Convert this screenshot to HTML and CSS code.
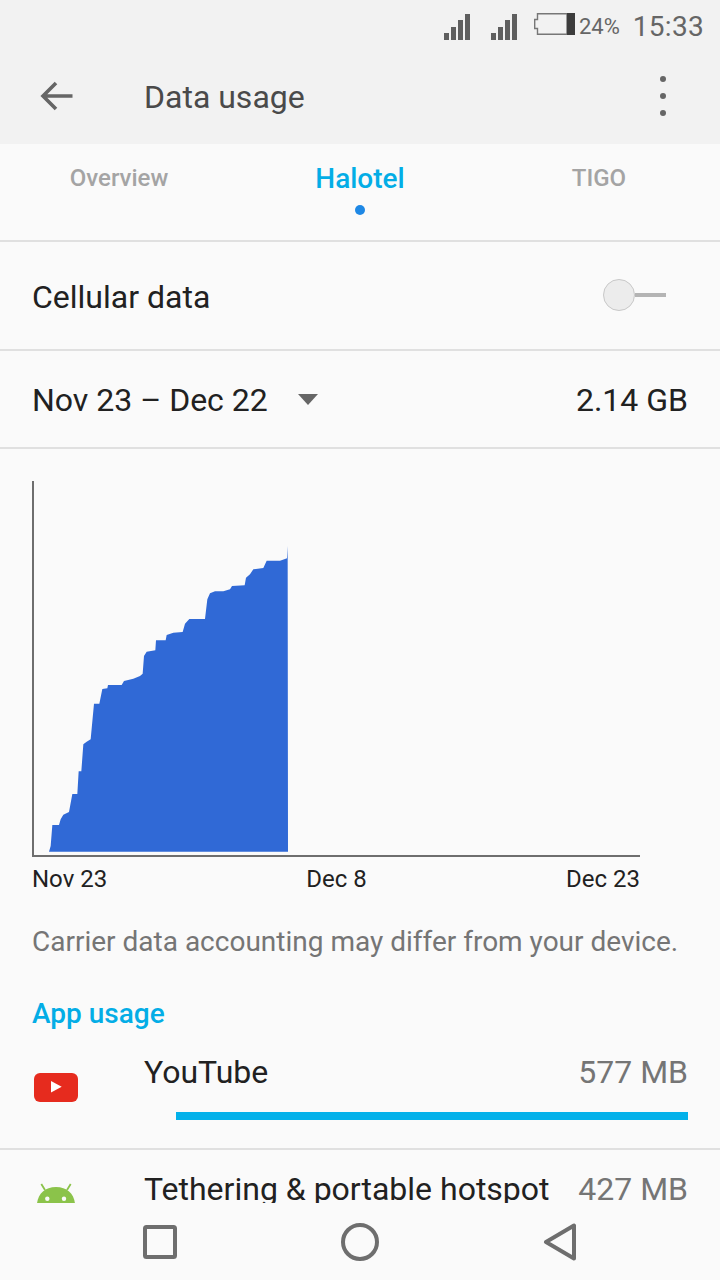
FILE: index.html
```html
<!DOCTYPE html>
<html lang="en">
<head>
<meta charset="utf-8">
<title>Data usage</title>
<link rel="stylesheet" href="styles.css">
</head>
<body>
<div class="screen">
  <header class="appbar">
    <div class="status">
      <svg class="sig" width="26" height="26" viewBox="0 0 26 26"><path d="M0 19h5v7H0zM7 13h5v13H7zM14 6h5v20h-5zM21 0h5v26h-5z"/></svg>
      <svg class="sig sig2" width="26" height="26" viewBox="0 0 26 26"><path d="M0 19h5v7H0zM7 13h5v13H7zM14 6h5v20h-5zM21 0h5v26h-5z"/></svg>
      <svg class="batt" width="41" height="22" viewBox="0 0 41 22"><path class="batt-o" d="M3.500 .7H33v20.600H3.500V15.500H.7V6.500H3.500z"/><rect class="batt-f" x="33" y="0" width="8" height="22"/></svg>
      <span class="pct">24%</span>
      <span class="time">15:33</span>
    </div>
    <div class="toolbar">
      <svg class="back" width="34" height="30" viewBox="0 0 34 30"><path d="M32.500 15H3M16 2 3 15l13 13"/></svg>
      <span class="title">Data usage</span>
      <svg class="more" width="6" height="40" viewBox="0 0 6 40"><circle cx="3" cy="3" r="3"/><circle cx="3" cy="20" r="3"/><circle cx="3" cy="37" r="3"/></svg>
    </div>
  </header>
  <main class="content">
    <nav class="tabs">
      <div class="tab">Overview</div>
      <div class="tab tab-on">Halotel<i class="dot"></i></div>
      <div class="tab">TIGO</div>
    </nav>
    <section class="row row-cell">
      <span class="label">Cellular data</span>
      <div class="switch"><i class="knob"></i><i class="track"></i></div>
    </section>
    <section class="row row-date">
      <span class="label date">Nov 23 – Dec 22</span><i class="caret"></i>
      <span class="total">2.14 GB</span>
    </section>
    <section class="chart">
      <svg class="graph" width="608" height="377" viewBox="0 0 608 377">
        <g transform="translate(-12 50) scale(.33333)">
          <polygon class="area" points="87,962 92,945 97,882 117,882 122,865 130,851 147,843 157,789 172,789 176,721 184,721 190,640 200,632 212,625 222,518 238,518 247,474 262,472 264,462 305,462 312,450 340,443 360,435 368,428 372,375 380,362 406,358 408,328 437,328 440,312 460,305 488,303 495,278 508,264 555,264 562,205 570,187 585,181 610,181 630,175 636,165 674,163 678,140 690,130 700,115 730,111 740,89 780,89 795,84 801,82 803,45 804,962"/>
        </g>
        <path class="axis" d="M1 0V375H608"/>
      </svg>
      <div class="ticks"><span>Nov 23</span><span>Dec 8</span><span>Dec 23</span></div>
    </section>
    <p class="note">Carrier data accounting may differ from your device.</p>
    <h2 class="subhead">App usage</h2>
    <div class="app app-first">
      <svg class="ico-yt" width="46" height="30" viewBox="0 0 46 30"><rect x="1" y="0" width="44" height="29" rx="6" fill="#e62b1e"/><path d="M18 8l10.700 5.800L18 19.600z" fill="#fff"/></svg>
      <div class="app-body">
        <div class="app-line"><span class="app-name">YouTube</span><span class="app-size">577 MB</span></div>
        <div class="bar"></div>
      </div>
    </div>
    <div class="app app-second">
      <svg class="ico-and" width="40" height="30" viewBox="0 0 40 30"><path d="M1 20.500C2 11 9 4 20 4s18 7 19 16.500V30H1z" fill="#8bc34a"/><path d="M5.300 1 9 7M34.700 1 31 7" stroke="#8bc34a" stroke-width="1.800" fill="none"/><circle cx="11.300" cy="15.700" r="2.200" fill="#fafafa"/><circle cx="28" cy="15.700" r="2.200" fill="#fafafa"/></svg>
      <div class="app-body">
        <div class="app-line"><span class="app-name">Tethering &amp; portable hotspot</span><span class="app-size">427 MB</span></div>
      </div>
    </div>
  </main>
  <footer class="navbar">
    <svg width="34" height="34" viewBox="0 0 34 34"><rect x="2" y="2" width="30" height="30" rx="1.500"/></svg>
    <svg width="38" height="38" viewBox="0 0 38 38"><circle cx="19" cy="19" r="17"/></svg>
    <svg width="34" height="38" viewBox="0 0 34 38"><path d="M3 19 31 2.500v33z"/></svg>
  </footer>
</div>
</body>
</html>
```
FILE: styles.css
```css
* { box-sizing: border-box; }
html, body { margin: 0; padding: 0; }
body { font-family: Roboto, "Noto Sans", sans-serif; background: #fafafa; color: #212121; }
.screen { width: 720px; height: 1280px; display: flex; flex-direction: column; overflow: hidden; }

.appbar { height: 144px; background: #f2f2f2; flex: none; }
.status { height: 48px; display: flex; align-items: flex-start; padding: 14px 16px 0 444px; color: #666; }
.sig { fill: #5f5f5f; }
.sig2 { margin-left: 21px; }
.batt { margin-left: 17px; margin-top: -1px; }
.batt-o { fill: none; stroke: #777; stroke-width: 1.400; }
.batt-f { fill: #3c3c3c; }
.pct { font-size: 22px; line-height: 26px; margin-left: 4px; }
.time { font-size: 28px; line-height: 26px; margin-left: auto; letter-spacing: .3px; }
.toolbar { height: 96px; display: flex; align-items: center; padding: 0 54px 0 40px; }
.back { fill: none; stroke: #666; stroke-width: 3.600; }
.title { font-size: 32px; color: #4a4a4a; margin: 2px 0 0 70px; flex: 1; }
.more { fill: #666; }

.content { flex: 1; min-height: 0; overflow: hidden; }
.tabs { height: 98px; display: grid; grid-template-columns: 240px 240px 240px; border-bottom: 2px solid #e0e0e0; }
.tab { position: relative; text-align: center; font-size: 24px; font-weight: 500; color: #a4a4a4; padding: 19px 2px 0 0; line-height: 30px; }
.tab-on { color: #03ade6; font-size: 28px; padding: 20px 0 0; }
.dot { position: absolute; left: 115px; top: 61px; width: 10px; height: 10px; border-radius: 50%; background: #1e88e5; }

.row { display: flex; align-items: center; padding: 0 32px; border-bottom: 2px solid #e0e0e0; }
.row-cell { height: 109px; justify-content: space-between; }
.row-date { height: 98px; }
.label { font-size: 32px; color: #212121; margin-top: 2px; }
.switch { display: flex; align-items: center; margin-right: 22px; margin-top: -1px; }
.knob { width: 32px; height: 32px; border-radius: 50%; background: #ececec; border: 1.500px solid #c8c8c8; }
.track { width: 31px; height: 4px; background: #b4b4b4; }
.caret { width: 0; height: 0; border-left: 10px solid transparent; border-right: 10px solid transparent; border-top: 11px solid #666; margin-left: 30px; }
.total { font-size: 32px; margin: 2px 0 0 auto; }

.chart { padding: 32px 0 0 32px; }
.graph { display: block; }
.area { fill: #3069d6; }
.axis { fill: none; stroke: #6e6e6e; stroke-width: 2; }
.ticks { width: 608px; display: flex; justify-content: space-between; font-size: 24px; line-height: 30px; color: #212121; margin-top: 6px; }

.note { margin: 31px 0 0 32px; font-size: 28px; line-height: 34px; color: #757575; white-space: nowrap; }
.subhead { margin: 38px 0 0 32px; font-size: 28px; line-height: 34px; font-weight: 500; color: #03ade6; }

.app { display: flex; padding: 0 32px; }
.app-first { height: 118px; border-bottom: 2px solid #e0e0e0; margin-top: 1px; }
.ico-yt { margin: 41px 0 0 1px; flex: none; }
.app-body { flex: 1; margin-left: 65px; }
.app-line { display: flex; justify-content: space-between; font-size: 32px; line-height: 40px; padding-top: 20px; white-space: nowrap; }
.app-size { color: #757575; }
.bar { height: 8px; background: #03b1ea; margin: 20px 0 0 32px; }
.app-second { height: 120px; }
.ico-and { margin: 33px 0 0 4px; flex: none; }
.app-second .app-body { margin-left: 68px; }
.app-second .app-line { padding-top: 19px; }

.navbar { height: 77px; flex: none; background: #fafafa; display: flex; align-items: center; padding: 0 143px; justify-content: space-between; }
.navbar svg { fill: none; stroke: #6e6e6e; stroke-width: 4; stroke-linejoin: round; }
```
